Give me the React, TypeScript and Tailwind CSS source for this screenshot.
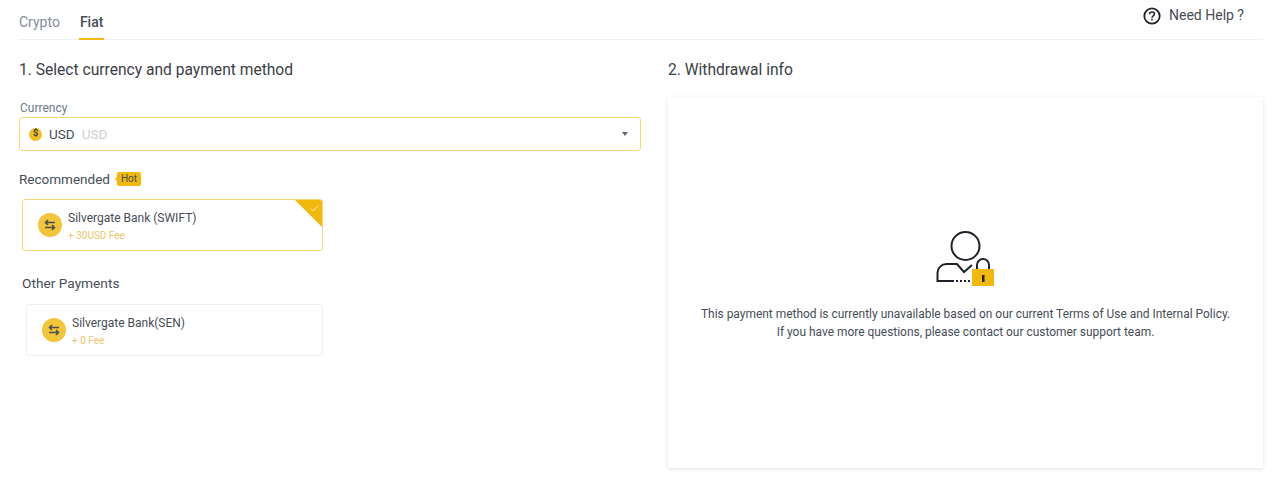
import { Check } from "lucide-react";

function TransferIcon() {
  return (
    <div className="w-6 h-6 rounded-full bg-[#f0b90b] opacity-80 flex items-center justify-center shrink-0">
      <svg width="12" height="12" viewBox="0 0 12 12" fill="none" stroke="#1e2329" strokeWidth="1.5">
        <path d="M11 3.5H1.8M4 1L1.5 3.5L4 6" />
        <path d="M1 8.5h9.2M8 6l2.5 2.5L8 11" />
      </svg>
    </div>
  );
}

function PaymentCard({ name, fee, selected }: { name: string; fee: string; selected?: boolean }) {
  return (
    <div
      className={
        selected
          ? "relative overflow-hidden w-[301px] h-[52px] ml-[3px] rounded-[3px] border border-[#f5d97f] flex items-center gap-[6px] pl-[15px]"
          : "relative overflow-hidden w-[297px] h-[52px] ml-[7px] rounded-[3px] border border-[#eeeff1] flex items-center gap-[6px] pl-[15px]"
      }
    >
      <TransferIcon />
      <div className="flex flex-col pt-[2px]">
        <span className="text-[12px] leading-[18px] text-[#474d57]">{name}</span>
        <span className="text-[10px] leading-[15px] mt-[1px] text-[#efc66b]">{fee}</span>
      </div>
      {selected && (
        <>
          <div className="absolute top-0 right-0 w-0 h-0 border-t-[27px] border-l-[27px] border-t-[#f0b90b] border-l-transparent" />
          <Check className="absolute top-[3px] right-[2px] text-white" size={11} strokeWidth={1.5} />
        </>
      )}
    </div>
  );
}

export default function App() {
  return (
    <div className="w-[1280px] h-[485px] overflow-hidden bg-white pl-[19px] pr-[17px] text-[#1e2329] font-['Roboto',sans-serif]">
      <div className="h-10 border-b border-[#f0f1f2] flex justify-between">
        <div className="flex gap-[19px] text-[14px]">
          <div className="pt-[12px] text-[#848e9c]">Crypto</div>
          <div className="relative pt-[12px] px-[1px] font-medium text-[#474d57]">
            Fiat
            <div className="absolute -bottom-[1px] left-0 right-0 h-[2px] bg-[#f0b90b]" />
          </div>
        </div>
        <div className="flex items-start gap-2 pt-[5px] pr-[19px] text-[14px] text-[#474d57]">
          <svg width="18" height="18" viewBox="0 0 18 18" fill="none" className="mt-[2px]">
            <circle cx="9" cy="9" r="7.7" stroke="#1e2329" strokeWidth="1.8" />
            <path d="M6.6 7.2c0-1.4 1-2.2 2.4-2.2s2.4.8 2.4 2.1c0 1.8-2.4 1.8-2.4 3.6" stroke="#1e2329" strokeWidth="1.6" />
            <rect x="8.2" y="11.8" width="1.6" height="1.6" fill="#1e2329" />
          </svg>
          <span className="leading-5">Need Help ?</span>
        </div>
      </div>

      <div className="flex gap-[27px]">
        <div className="w-[622px]">
          <h2 className="mt-[20px] text-[15.6px] leading-5 text-[#3b4048]">1. Select currency and payment method</h2>
          <div className="mt-[20px] text-[12px] leading-4 text-[#707a8a] pl-[1px]">Currency</div>
          <div className="mt-[1px] h-[34px] rounded-[3px] border border-[#f3d978] flex items-center pl-[9px] pr-[12px]">
            <div className="w-[13px] h-[13px] rounded-full bg-[#f0b90b] opacity-90 flex items-center justify-center text-[9px] font-bold text-[#1e2329]">$</div>
            <span className="ml-[7px] text-[13.5px] text-[#474d57]">USD</span>
            <span className="ml-[7px] text-[13.5px] text-[#cdd0d5]">USD</span>
            <div className="ml-auto w-0 h-0 border-x-[3.5px] border-t-[4px] border-x-transparent border-t-[#5e6673]" />
          </div>
          <div className="mt-[18px] flex items-center h-5">
            <span className="text-[13.5px] text-[#474d57]">Recommended</span>
            <span className="ml-[7px] relative h-[14px] px-[4px] rounded-[2px] bg-[#f0b90b] text-[10px] leading-[14px] text-[#474d57]">
              Hot
              <span className="absolute -left-[2px] top-[5px] w-0 h-0 border-y-[2px] border-r-[2px] border-y-transparent border-r-[#f0b90b]" />
            </span>
          </div>
          <div className="mt-[10px]">
            <PaymentCard name="Silvergate Bank (SWIFT)" fee="+ 30USD Fee" selected />
          </div>
          <div className="mt-[22px] ml-[3px] h-5 text-[13.7px] leading-5 text-[#474d57]">Other Payments</div>
          <div className="mt-[11px]">
            <PaymentCard name="Silvergate Bank(SEN)" fee="+ 0 Fee" />
          </div>
        </div>

        <div className="w-[595px]">
          <h2 className="mt-[20px] text-[15.6px] leading-5 text-[#3b4048]">2. Withdrawal info</h2>
          <div className="mt-[17px] h-[371px] bg-white shadow-[0_1px_4px_rgba(0,0,0,0.12)] flex flex-col items-center pt-[132px]">
            <svg width="60" height="60" viewBox="0 0 60 60" fill="none" className="ml-[1px]">
              <circle cx="29.5" cy="17" r="14" stroke="#1e2329" strokeWidth="2" />
              <path d="M18 52H1.5V44c0-5 4-9 9-9H21l7 8 8-7" stroke="#1e2329" strokeWidth="2" />
              <path d="M20 52h16" stroke="#1e2329" strokeWidth="2" strokeDasharray="2 2" />
              <path d="M41 40v-4a6 6 0 0 1 12 0v4" stroke="#1e2329" strokeWidth="2" />
              <rect x="36" y="40" width="22" height="17" fill="#f0b90b" />
              <rect x="46" y="46" width="2.5" height="7" fill="#1e2329" />
            </svg>
            <p className="mt-[16px] text-[11.95px] leading-[18px] text-[#474d57] text-center">
              This payment method is currently unavailable based on our current Terms of Use and Internal Policy.
              <br />
              If you have more questions, please contact our customer support team.
            </p>
          </div>
        </div>
      </div>
    </div>
  );
}
